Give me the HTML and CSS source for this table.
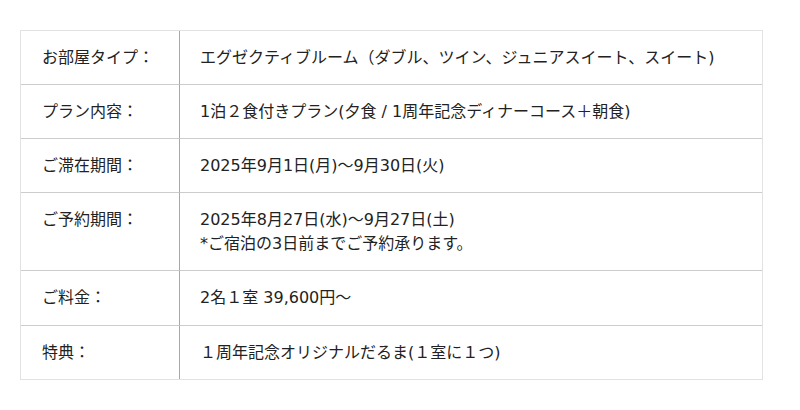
FILE: index.html
```html
<!DOCTYPE html>
<html lang="ja">
<head>
<meta charset="utf-8">
<link rel="stylesheet" href="styles.css">
</head>
<body>
<div class="page">
<table class="plan">
<tbody>
<tr><th>お部屋タイプ：</th><td>エグゼクティブルーム（ダブル、ツイン、ジュニアスイート、スイート)</td></tr>
<tr><th>プラン内容：</th><td>1泊２食付きプラン(夕食 / 1周年記念ディナーコース＋朝食)</td></tr>
<tr><th>ご滞在期間：</th><td>2025年9月1日(月)～9月30日(火)</td></tr>
<tr><th>ご予約期間：</th><td>2025年8月27日(水)～9月27日(土)<br>*ご宿泊の3日前までご予約承ります。</td></tr>
<tr class="price"><th>ご料金：</th><td>2名１室 39,600円～</td></tr>
<tr><th>特典：</th><td>１周年記念オリジナルだるま(１室に１つ)</td></tr>
</tbody>
</table>
</div>
</body>
</html>
```

FILE: styles.css
```css
html, body {
  margin: 0;
  padding: 0;
  background: #ffffff;
}
.page {
  padding: 30px 0 0 20px;
}
.plan {
  width: 743px;
  border: 1px solid #e2e2e2;
  border-collapse: separate;
  border-spacing: 0;
  font-family: "DejaVu Sans", "Noto Sans CJK JP", sans-serif;
  font-size: 16px;
  line-height: 24px;
  color: #222222;
}
.plan th,
.plan td {
  text-align: left;
  font-weight: normal;
  vertical-align: top;
  padding: 14.5px 20px 14.5px 20px;
  border-bottom: 1px solid #cccccc;
}
.plan .price th,
.plan .price td {
  padding-top: 15px;
  padding-bottom: 15px;
}
.plan tr:last-child th,
.plan tr:last-child td {
  border-bottom: none;
}
.plan th {
  width: 117px;
  padding-left: 21px;
  border-right: 1px solid #a8a8a8;
}
```
